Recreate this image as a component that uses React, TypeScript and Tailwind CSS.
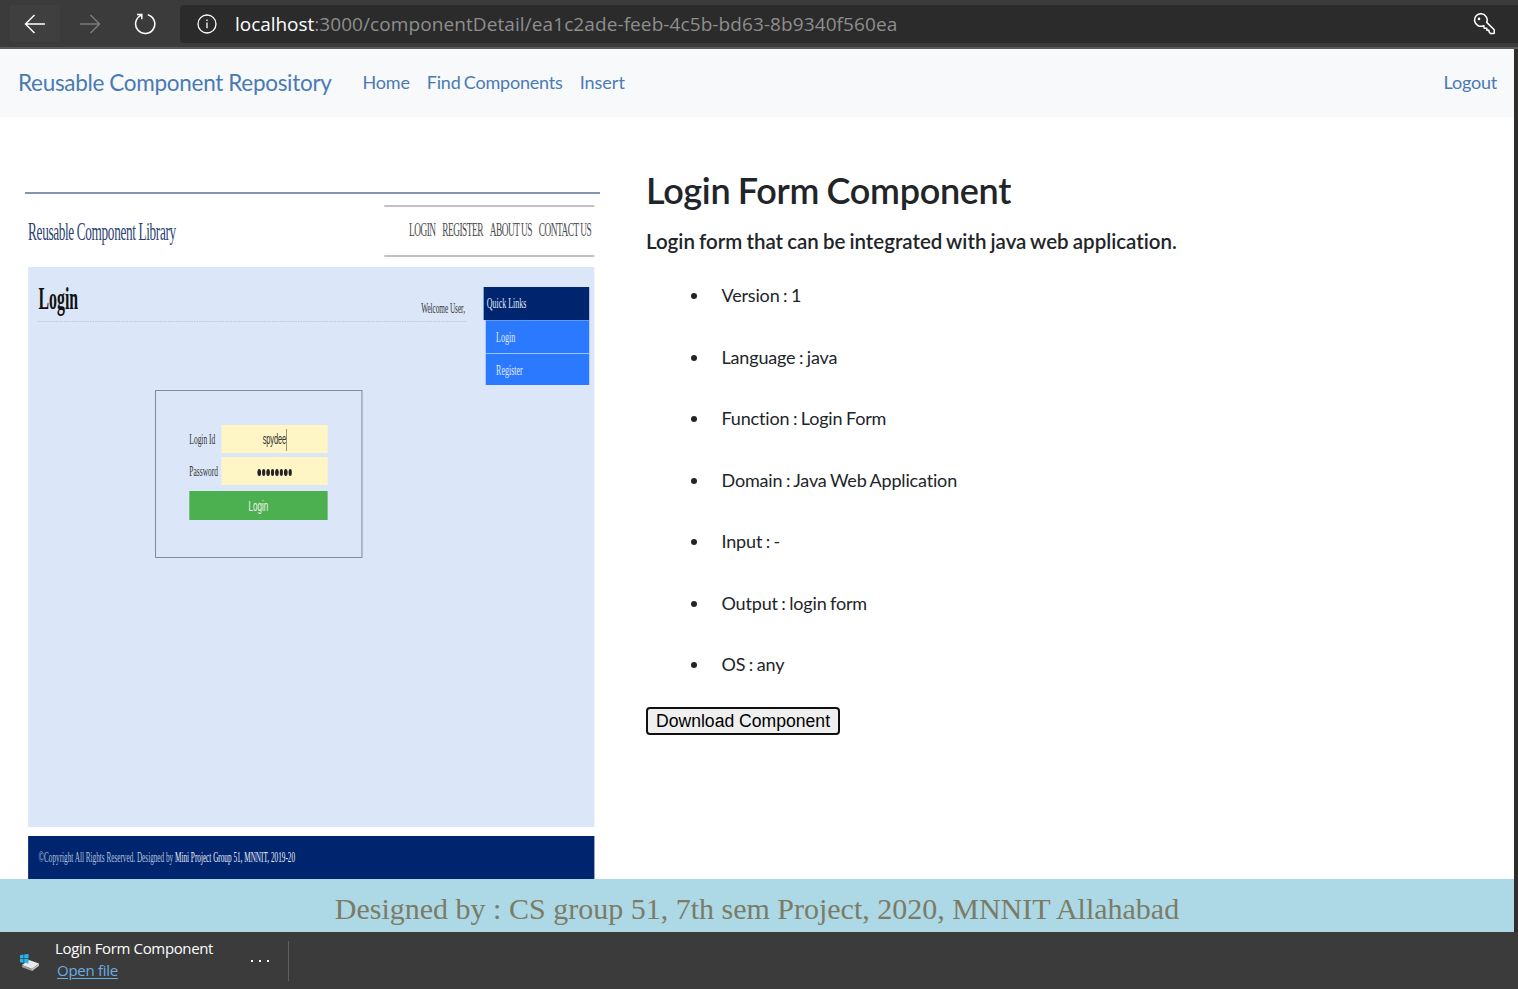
import React from "react";

const details = [
  "Version : 1",
  "Language : java",
  "Function : Login Form",
  "Domain : Java Web Application",
  "Input : -",
  "Output : login form",
  "OS : any",
];

function BrowserBar() {
  return (
    <header className="flex h-[49px] shrink-0 items-start border-b-2 border-[#5a5a5a] bg-[#3b3b3b] pt-[5px]">
      <div className="ml-[10px] flex h-[37px] w-[50px] items-center justify-center bg-[#3f3f3f]">
        <svg width="22" height="20" viewBox="0 0 22 20" fill="none" stroke="#fff" strokeWidth="1.4">
          <path d="M21 10H1.5M10.5 1L1.5 10l9 9" />
        </svg>
      </div>
      <div className="flex h-[37px] w-[60px] items-center justify-center">
        <svg width="22" height="20" viewBox="0 0 22 20" fill="none" stroke="#7b7b7b" strokeWidth="1.4">
          <path d="M1 10h19.500M11.500 1l9 9-9 9" />
        </svg>
      </div>
      <div className="flex h-[37px] w-[50px] items-center justify-center">
        <svg width="22" height="22" viewBox="0 0 22 22" fill="none" stroke="#fff" strokeWidth="1.5">
          <path d="M13.8 1.700A9.600 9.600 0 1 1 7 2.300M3 1.400h4.800v4.800" />
        </svg>
      </div>
      <div className="ml-[10px] flex h-[38px] flex-1 items-center rounded-l-sm bg-[#2b2b2b]">
        <svg className="ml-[17px]" width="20" height="20" viewBox="0 0 20 20" fill="none" stroke="#fff" strokeWidth="1.3">
          <circle cx="10" cy="10" r="9" />
          <path d="M10 8.600v5.600" />
          <path d="M10 5.400v1.600" />
        </svg>
        <p className="ml-[18px] font-['Open_Sans',sans-serif] text-[19px] leading-6 tracking-[0.09px] whitespace-nowrap text-[#8e8e8e]">
          <span className="tracking-[-0.05px] text-white">localhost</span>:3000/componentDetail/ea1c2ade-feeb-4c5b-bd63-8b9340f560ea
        </p>
        <svg className="mr-[23px] ml-auto" width="22" height="22" viewBox="0 0 22 22" fill="none" stroke="#fff" strokeWidth="1.5">
          <path d="M13.700 9.400A6.300 6.300 0 1 0 10.800 12.600l.4 2.600h2.600v2h2.200v1.600l1.400 1.600h3.800v-3.600z" strokeLinejoin="round" />
          <circle cx="6" cy="5.900" r="1.300" fill="#fff" stroke="none" />
        </svg>
      </div>
    </header>
  );
}

function SiteNav() {
  return (
    <nav className="flex h-[68px] items-center bg-[#f7f9fb] pr-[17px] pl-[18px] text-[18px] text-[#4a7ab5]">
      <span className="text-[22.5px] tracking-[-0.3px] [word-spacing:-0.2px]">Reusable Component Repository</span>
      <div className="flex flex-1 pb-[2px] tracking-[-0.2px] [word-spacing:-1.2px]">
        <span className="ml-[31px]">Home</span>
        <span className="ml-[17px]">Find Components</span>
        <span className="ml-[17px] tracking-normal">Insert</span>
        <span className="ml-auto">Logout</span>
      </div>
    </nav>
  );
}

function Preview() {
  return (
    <div className="h-[687px] w-[575px] overflow-hidden">
      <div className="flex h-[687px] w-[1106px] origin-left scale-x-[0.52] flex-col border-t-2 border-[#8593b4] bg-white pr-[11px] pl-[6px] font-['Liberation_Serif',serif] whitespace-nowrap">
        <div className="flex h-[73px] items-start justify-between pt-[11px]">
          <span className="mt-[12px] text-[25.5px] leading-[30px] tracking-[-0.68px] text-[#2b3f73]">Reusable Component Library</span>
          <div className="flex h-[52px] w-[404px] items-center justify-end gap-[13px] border-y-2 border-[#c2c2c4] pr-[6px] pb-[1px] text-[18px] tracking-[-0.98px] text-[#4c4c4c]">
            <span>LOGIN</span>
            <span>REGISTER</span>
            <span>ABOUT US</span>
            <span>CONTACT US</span>
          </div>
        </div>
        <div className="flex h-[560px] items-start bg-[#dbe7f8] pl-[19px]">
          <div className="w-[823px]">
            <div className="flex h-[55px] items-start justify-between border-b border-dashed border-[#b3bdcb]">
              <span className="mt-[14px] ml-px text-[30.5px] leading-9 font-bold text-[#111]">Login</span>
              <span className="mt-[32px] mr-[2px] text-[14px] leading-5 tracking-[-0.1px] text-[#333]">Welcome User,</span>
            </div>
            <div className="mt-[68px] ml-[225px] flex h-[168px] w-[399px] flex-col border-x-2 border-y border-[#7f8ca6] pt-[34px] pl-[64px] text-[14.4px] text-[#333]">
              <div className="flex h-[28px] w-[266px] items-center justify-between">
                <span className="pt-px">Login Id</span>
                <span className="flex h-[28px] w-[204px] items-center justify-center bg-[#fff5c5] pt-[2px] font-['Liberation_Sans',sans-serif]">
                  <span className="border-r border-[#333] tracking-[-0.3px]">spydee</span>
                </span>
              </div>
              <div className="mt-[4px] flex h-[28px] w-[266px] items-center justify-between">
                <span className="pt-px">Password</span>
                <span className="flex h-[28px] w-[204px] items-center justify-center gap-[2px] bg-[#fff5c5] pt-[3px]">
                  {Array.from({ length: 8 }, (_, i) => (
                    <i key={i} className="h-[7px] w-[6.5px] rounded-full bg-[#222]" />
                  ))}
                </span>
              </div>
              <div className="mt-[6px] flex h-[29px] w-[266px] items-center justify-center bg-[#4caf50] pt-px font-['Liberation_Sans',sans-serif] text-[15.5px] text-[#eef8ee]">
                <span>Login</span>
              </div>
            </div>
          </div>
          <div className="mt-[20px] ml-[34px] w-[203px] text-[15.3px] text-[#e4ecfb]">
            <div className="flex h-[33px] items-center bg-[#00256f] pl-[6px]">Quick Links</div>
            <div className="ml-[4px] flex h-[33px] items-center border-t border-[#5f9af8] bg-[#2a79ff] pl-[20px]">Login</div>
            <div className="ml-[4px] flex h-[32px] items-center border-t border-[#9cc2fb] bg-[#2a79ff] pt-px pl-[20px]">Register</div>
          </div>
        </div>
        <div className="mt-[9px] flex h-[43px] items-center bg-[#00256f] pt-[2px] pl-[20px] text-[13.9px] text-[#b4c1dd]">
          <span className="whitespace-pre">©Copyright All Rights Reserved. Designed by </span>
          <span className="text-[#e8edf8]">Mini Project Group 51, MNNIT, 2019-20</span>
        </div>
      </div>
    </div>
  );
}

function ComponentInfo() {
  return (
    <section className="ml-[46px] pt-[52px] text-[#212529]">
      <h1 className="text-[36px] leading-[43px] font-semibold tracking-[-0.32px] [word-spacing:-1.1px]">Login Form Component</h1>
      <h2 className="mt-[17px] text-[20.5px] leading-[24px] font-semibold [font-variant-ligatures:none] [word-spacing:-1px]">
        Login form that can be integrated with java web application.
      </h2>
      <ul className="mt-[29px] pl-[45px]">
        {details.map((d) => (
          <li key={d} className="flex h-[61.5px] items-start text-[18px] leading-[27px] tracking-[-0.17px] [font-variant-ligatures:none] [word-spacing:-0.9px]">
            <i className="mt-[11px] mr-[24.5px] h-[6px] w-[6px] rounded-full bg-[#212529]" />
            <span>{d}</span>
          </li>
        ))}
      </ul>
      <button className="-mt-[6px] block h-[28px] w-[194px] rounded-[4px] border-2 border-[#101010] bg-[#efefef] font-['Liberation_Sans',sans-serif] text-[17.6px] leading-[24px] whitespace-nowrap text-black">
        Download Component
      </button>
    </section>
  );
}

function DownloadBar() {
  return (
    <div className="flex h-[57px] shrink-0 bg-[#3b3b3b] font-['Open_Sans',sans-serif]">
      <svg className="mt-[21px] ml-[19px]" width="21" height="18" viewBox="0 0 21 18">
        <path d="M3 12l7-5 10 3.500-7 5.500z" fill="#e9e9e9" />
        <path d="M3 12l10 4v2L3 14.200z" fill="#9c9c9c" />
        <path d="M13 16l7-5.500v2.300L13 18z" fill="#c4c4c4" />
        <path d="M1 2.200l3.500-.6v3.700H1zM5.200 1.500L9.500 1v4.300H5.200zM1 6h3.500v3.700L1 9.200zM5.200 6h4.300v4.400l-4.300-.6z" fill="#27b7ee" />
      </svg>
      <div className="ml-[15px] w-[180px] pt-[6px]">
        <p className="text-[15px] leading-[20px] tracking-[-0.36px] text-white">Login Form Component</p>
        <p className="mt-[2px] ml-[2px] text-[15px] leading-[20px] tracking-[-0.28px] text-[#6aade4]">
          <span className="underline underline-offset-2">Open file</span>
        </p>
      </div>
      <div className="mt-[28px] ml-[16px] flex gap-[6px]">
        <i className="h-[2px] w-[2px] bg-white" />
        <i className="h-[2px] w-[2px] bg-white" />
        <i className="h-[2px] w-[2px] bg-white" />
      </div>
      <div className="mt-[9px] ml-[19px] h-[40px] w-px bg-[#606060]" />
    </div>
  );
}

export default function App() {
  return (
    <div className="flex h-[989px] w-[1518px] flex-col overflow-hidden bg-[#302e2d] font-['Lato',sans-serif]">
      <BrowserBar />
      <main className="flex w-[1514px] flex-1 flex-col bg-white">
        <SiteNav />
        <div className="flex h-[762px] pl-[25px]">
          <div className="pt-[75px]">
            <Preview />
          </div>
          <ComponentInfo />
        </div>
        <footer className="flex flex-1 items-center justify-center bg-[#add8e6] pt-[7px] font-['Liberation_Serif',serif] text-[30px] leading-none text-[#7c7c66]">
          Designed by : CS group 51, 7th sem Project, 2020, MNNIT Allahabad
        </footer>
      </main>
      <DownloadBar />
    </div>
  );
}
